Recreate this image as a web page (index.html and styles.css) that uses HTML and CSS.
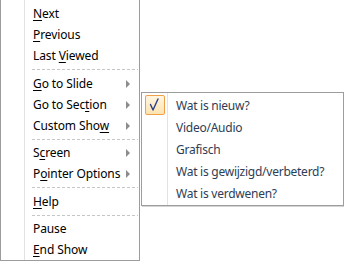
FILE: index.html
```html
<!DOCTYPE html>
<html lang="en">
<head>
    <meta charset="UTF-8">
    <meta name="viewport" content="width=device-width, initial-scale=1.0">
    <title>Slide Show menu</title>
    <link rel="stylesheet" href="styles.css">
</head>
<body>
    <div class="menu">
        <div class="item"><span><u>N</u>ext</span></div>
        <div class="item"><span><u>P</u>revious</span></div>
        <div class="item"><span>Last <u>V</u>iewed</span></div>
        <div class="sep"></div>
        <div class="item"><span><u>G</u>o to Slide</span><i class="arrow"></i></div>
        <div class="item"><span>Go to Sec<u>t</u>ion</span><i class="arrow"></i></div>
        <div class="item"><span>Custom Sho<u>w</u></span><i class="arrow"></i></div>
        <div class="sep tight"></div>
        <div class="item"><span>S<u>c</u>reen</span><i class="arrow"></i></div>
        <div class="item"><span>P<u>o</u>inter Options</span><i class="arrow"></i></div>
        <div class="sep"></div>
        <div class="item"><span><u>H</u>elp</span></div>
        <div class="sep tight"></div>
        <div class="item"><span>Pause</span></div>
        <div class="item"><span><u>E</u>nd Show</span></div>
    </div>

    <!-- sections submenu -->
    <div class="submenu">
        <div class="subitem">
            <span class="check on">
                <svg width="18" height="18" viewBox="0 0 18 18"><path d="M4.5 8.5 L7 14 L12 3" fill="none" stroke="#2c3f86" stroke-width="1.4" stroke-linecap="round" stroke-linejoin="round"/></svg>
            </span>
            <span>Wat is nieuw?</span>
        </div>
        <div class="subitem"><span class="check"></span><span>Video/Audio</span></div>
        <div class="subitem"><span class="check"></span><span>Grafisch</span></div>
        <div class="subitem"><span class="check"></span><span>Wat is gewijzigd/verbeterd?</span></div>
        <div class="subitem"><span class="check"></span><span>Wat is verdwenen?</span></div>
    </div>
</body>
</html>
```

FILE: styles.css
```css
*{
    padding: 0;
    margin: 0;
    box-sizing: border-box;
}
body{
    background-color: #fff;
    font-family: "Noto Sans", "Open Sans", sans-serif;
    font-size: 12px;
}
u{
    text-decoration: underline;
    text-underline-offset: 2px;
}
.menu{
    width: 140px;
    border: 1px solid #9c9c9c;
    border-top: none;
    padding: 3px 0 0;
    color: #000;
    letter-spacing: -0.1px;
    background: linear-gradient(to right, #fff 23px, #e2e3e3 23px, #e2e3e3 24px, #fff 24px);
}
.menu .item{
    height: 21px;
    display: flex;
    align-items: center;
    justify-content: space-between;
    padding-left: 32px;
    padding-right: 9px;
    white-space: nowrap;
}
.arrow{
    width: 0;
    height: 0;
    border-left: 4px solid #8c8c8c;
    border-top: 4px solid transparent;
    border-bottom: 4px solid transparent;
}
.sep{
    height: 1px;
    margin: 3px 1px 3px 31px;
    background: repeating-linear-gradient(to right, #c6c6c6 0, #c6c6c6 3px, transparent 3px, transparent 5px);
}
.sep.tight{
    margin-bottom: 2px;
}
.submenu{
    position: absolute;
    left: 141px;
    top: 92px;
    width: 203px;
    border: 1px solid #9d9d9d;
    padding: 1px 0;
    color: #2e3d55;
    letter-spacing: -0.25px;
    background: linear-gradient(to right, #fff 25px, #e2e3e3 25px, #e2e3e3 26px, #fff 26px);
    box-shadow: 1px 1px 0 #d4d4d4;
}
.subitem{
    height: 22px;
    display: flex;
    align-items: center;
    padding-left: 3px;
    white-space: nowrap;
}
.check{
    width: 20px;
    height: 20px;
    margin-right: 11px;
    display: flex;
    align-items: center;
    justify-content: center;
}
.check.on{
    border: 1px solid #f0a048;
    border-radius: 2px;
    background: linear-gradient(#fff6e2, #fde3b0);
}
```
